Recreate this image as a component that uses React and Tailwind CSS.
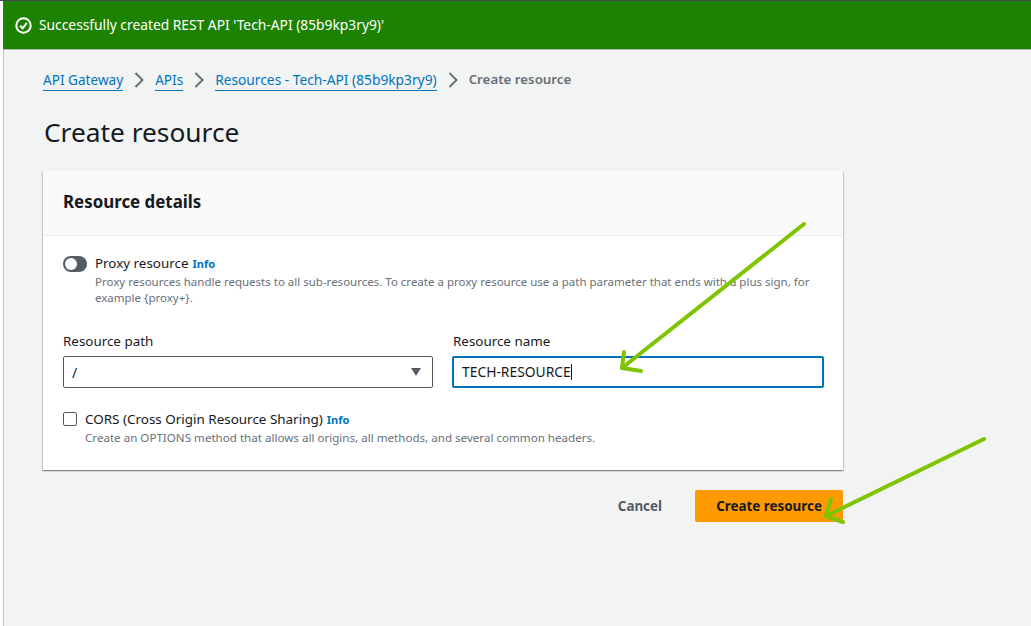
import React from 'react';

const FONT = "font-['Noto_Sans',sans-serif]";

function Crumb({ children, className = '' }) {
  return <a className={`text-[#0073bb] text-[13.6px] leading-[20px] border-b border-[#0073bb] ${className}`}>{children}</a>;
}

function Sep() {
  return (
    <svg className="w-[10px] h-[16px] mx-[11px]" viewBox="0 0 10 16" fill="none" stroke="#687078" strokeWidth="2">
      <path d="M1.5 1 8.5 8 1.5 15" />
    </svg>
  );
}

function Info() {
  return <span className="text-[#0073bb] text-[11px] font-bold ml-[4px]">Info</span>;
}

export default function App() {
  return (
    <div className={`${FONT} h-[626px] overflow-hidden bg-white relative`}>
      <div className="h-[1px] bg-[#414750]" />
      <div className="ml-[3px] h-[48px] bg-[#1d8102] flex items-center pl-[12px] text-white text-[13.8px]">
        <svg className="w-[17px] h-[17px] mr-[7px]" viewBox="0 0 16 16" fill="none" stroke="white" strokeWidth="1.9">
          <circle cx="8" cy="8" r="6.8" />
          <path d="M4.8 8.2 7.2 10.6 11.2 5.6" />
        </svg>
        Successfully created REST API 'Tech-API (85b9kp3ry9)'
      </div>

      <div className="ml-[3px] h-[577px] bg-[#f2f3f3] border-l border-t border-l-[#c4c7c9] border-t-[#b4b8ba] pl-[39px]">
        <div className="flex items-center pt-[20px] h-[40px]">
          <Crumb>API Gateway</Crumb>
          <Sep />
          <Crumb>APIs</Crumb>
          <Sep />
          <Crumb className="text-[13.75px]">Resources - Tech-API (85b9kp3ry9)</Crumb>
          <Sep />
          <span className="text-[#687078] text-[13.3px] font-semibold">Create resource</span>
        </div>

        <h1 className="text-[#16191f] text-[26.3px] leading-[36px] mt-[24px] ml-[1px]">Create resource</h1>

        <div className="w-[800px] mt-[21px] bg-white shadow-[0_1px_1px_0_rgba(0,28,36,0.3),1px_1px_1px_0_rgba(0,28,36,0.15),-1px_1px_1px_0_rgba(0,28,36,0.15)]">
          <div className="h-[65px] bg-[#fafafa] border-b border-[#eaeded] flex items-center pl-[20px] pb-[2px]">
            <h2 className="text-[#16191f] text-[16.9px] font-bold">Resource details</h2>
          </div>

          <div className="px-[20px] pt-[17px] h-[234px]">
            <div className="flex">
              <div className="w-[24px] h-[16px] mt-[3px] rounded-full bg-[#545b64] relative shrink-0">
                <div className="absolute left-[2px] top-[2px] w-[12px] h-[12px] rounded-full bg-white" />
              </div>
              <div className="ml-[8px]">
                <div className="text-[#16191f] text-[13.4px] leading-[20px]">
                  Proxy resource<Info />
                </div>
                <div className="text-[#687078] text-[11.5px] leading-[16px] w-[725px]">
                  {'Proxy resources handle requests to all sub-resources. To create a proxy resource use a path parameter that ends with a plus sign, for example {proxy+}.'}
                </div>
              </div>
            </div>

            <div className="flex gap-[19px] mt-[25px]">
              <div className="w-[370px] shrink-0">
                <div className="text-[#16191f] text-[13.4px] leading-[20px] mb-[5px]">Resource path</div>
                <div className="h-[32px] bg-white border border-[#545b64] rounded-[2px] flex items-center justify-between pl-[8px] pr-[10px]">
                  <span className="text-[#16191f] text-[14px]">/</span>
                  <svg className="w-[12px] h-[8px]" viewBox="0 0 12 8"><path d="M1 0h10L6 8z" fill="#545b64" /></svg>
                </div>
              </div>
              <div className="w-[372px] shrink-0">
                <div className="text-[#16191f] text-[13.4px] leading-[20px] mb-[5px] pl-[1px]">Resource name</div>
                <div className="h-[32px] bg-white border-2 border-[#0073bb] rounded-[2px] flex items-center pl-[8px]">
                  <span className="text-[#16191f] text-[13.85px]">TECH-RESOURCE</span>
                  <span className="w-[1px] h-[16px] bg-[#16191f]" />
                </div>
              </div>
            </div>

            <div className="flex mt-[21px]">
              <div className="w-[14px] h-[14px] mt-[3px] bg-white border border-[#545b64] rounded-[2px] shrink-0" />
              <div className="ml-[8px]">
                <div className="text-[#16191f] text-[13.45px] leading-[20px]">
                  CORS (Cross Origin Resource Sharing)<Info />
                </div>
                <div className="text-[#687078] text-[11.6px] leading-[16px]">
                  Create an OPTIONS method that allows all origins, all methods, and several common headers.
                </div>
              </div>
            </div>
          </div>
        </div>

        <div className="w-[800px] flex justify-end items-center mt-[20px]">
          <span className="text-[#545b64] text-[13.4px] font-bold mr-[33px]">Cancel</span>
          <div className="w-[148px] h-[32px] bg-[#ff9900] rounded-[2px] flex items-center justify-center text-[#16191f] text-[13.4px] font-bold">
            Create resource
          </div>
        </div>
      </div>

      {/* green annotation arrows */}
      <svg className="absolute inset-0 pointer-events-none" width="1031" height="626" fill="none" stroke="#7fc400" strokeWidth="4" strokeLinecap="round" strokeLinejoin="round">
        <path d="M804 224 622 368" />
        <path d="M624 352 622 368 641 371" />
        <path d="M984 439 826 516" />
        <path d="M831 499 826 516 843 522" />
      </svg>
    </div>
  );
}
